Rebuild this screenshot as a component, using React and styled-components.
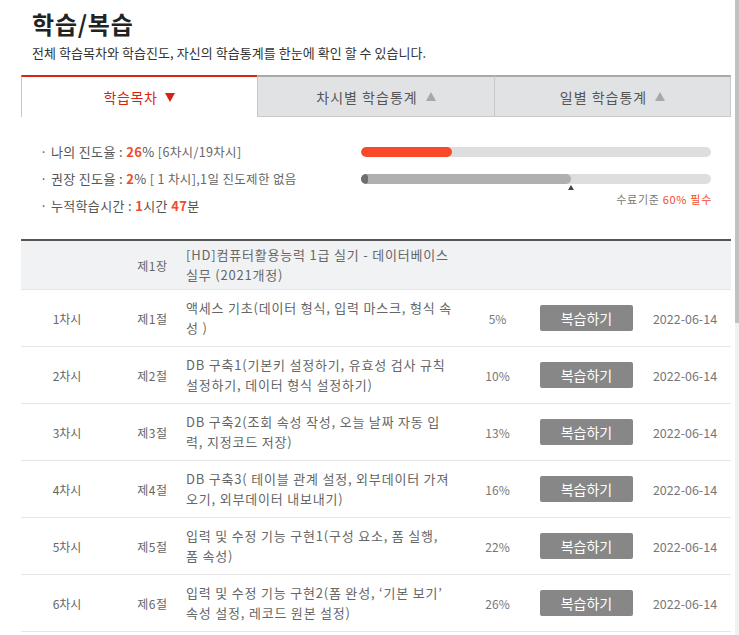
import React from "react";
import styled, { createGlobalStyle } from "styled-components";

const Global = createGlobalStyle`
  html { background: #fff; }
  body {
    margin: 0;
    font-family: "Noto Sans CJK KR", "Noto Sans", sans-serif;
    color: #555;
  }
`;

const ScrollTrack = styled.div`
  position: fixed;
  top: 0;
  right: 0;
  width: 4px;
  height: 100vh;
  background: #f1f1f1;
`;

const ScrollThumb = styled.div`
  height: 323px;
  background: #c1c1c1;
`;

const Page = styled.div`
  width: 710px;
  padding: 8px 0 0 21px;
`;

const Title = styled.h1`
  margin: 0 0 0 11px;
  font-size: 24px;
  line-height: 32px;
  font-weight: 700;
  color: #222;
  letter-spacing: 0.8px;
`;

const Subtitle = styled.p`
  margin: 4px 0 0 11px;
  font-size: 13px;
  line-height: 18px;
  color: #333;
  letter-spacing: 0.05px;
`;

const Tabs = styled.div`
  margin-top: 13px;
  display: grid;
  grid-template-columns: 236px 237px 237px;
`;

const Tab = styled.div`
  display: flex;
  align-items: center;
  justify-content: center;
  gap: 8px;
  font-size: 14px;
  letter-spacing: ${(p) => (p.$active ? "0.6px" : "1px")};
  box-sizing: content-box;
  border-top: 2px solid ${(p) => (p.$active ? "#d9220f" : "#a9a9a9")};
  border-left: 1px solid #c8c8c8;
  border-bottom: ${(p) => (p.$active ? "0" : "1px solid #c8c8c8")};
  border-right: ${(p) => (p.$last ? "1px solid #c8c8c8" : "0")};
  height: ${(p) => (p.$active ? "40px" : "39px")};
  background: ${(p) => (p.$active ? "#fff" : "#e1e2e4")};
  color: ${(p) => (p.$active ? "#d9220f" : "#555")};
`;

const Arrow = styled.span`
  display: inline-block;
  width: 0;
  height: 0;
  border-left: 5.5px solid transparent;
  border-right: 5.5px solid transparent;
  ${(p) =>
    p.$down
      ? `border-top: 9px solid #d9220f;`
      : `border-bottom: 9px solid #a8a8a8;`}
`;

const Stats = styled.div`
  display: flex;
  justify-content: space-between;
  padding: 21px 20px 0 0;
`;

const StatList = styled.ul`
  margin: 0;
  padding: 0 0 0 19px;
  list-style: none;
`;

const StatItem = styled.li`
  font-size: 13px;
  line-height: 27px;
  color: #555;
  letter-spacing: 0.35px;
`;

const Red = styled.b`
  color: #f2492c;
  font-weight: 700;
`;

const Small = styled.span`
  font-size: 12.5px;
  color: #666;
`;

const Bars = styled.div`
  width: 350px;
`;

const BarRow = styled.div`
  height: 27px;
  display: flex;
  align-items: center;
  position: relative;
`;

const Track = styled.div`
  position: relative;
  width: 100%;
  height: 10px;
  border-radius: 5px;
  background: #dedede;
  overflow: hidden;
`;

const Fill = styled.div`
  position: absolute;
  left: 0;
  top: 0;
  bottom: 0;
  border-radius: 5px;
  background: ${(p) => p.$color};
`;

const Marker = styled.span`
  position: absolute;
  top: 20px;
  width: 0;
  height: 0;
  margin-left: -3px;
  border-left: 3px solid transparent;
  border-right: 3px solid transparent;
  border-bottom: 5px solid #444;
`;

const Caption = styled.div`
  text-align: right;
  font-size: 11px;
  line-height: 14px;
  color: #777;
  letter-spacing: 0.7px;
  margin-right: -1px;
`;

const CaptionRed = styled.span`
  color: #f2492c;
`;

const Table = styled.div`
  margin-top: 20px;
  border-top: 2px solid #555;
`;

const Row = styled.div`
  display: grid;
  grid-template-columns: 92px 73px 279px 65px 113px 88px;
  align-items: center;
  min-height: ${(p) => (p.$head ? "48px" : "56px")};
  border-bottom: 1px solid #e6e6e6;
  background: ${(p) => (p.$head ? "#f1f2f4" : "#fff")};
  font-size: 12px;
  color: #666;
`;

const Cell = styled.div`
  text-align: center;
  letter-spacing: ${(p) => (p.$sec ? "0.6px" : "0")};
  padding-left: ${(p) => (p.$sec ? 6 : 0)}px;
`;

const TitleCell = styled.div`
  font-size: 13px;
  line-height: 20px;
  letter-spacing: 0.8px;
  color: #666;
  padding-right: 12px;
`;

const Pct = styled.div`
  text-align: center;
  font-size: 12px;
  color: #777;
`;

const ButtonCell = styled.div`
  display: flex;
  justify-content: center;
`;

const ReviewButton = styled.button`
  width: 93px;
  height: 26px;
  border: 0;
  border-radius: 2px;
  background: #878787;
  color: #fff;
  font-family: inherit;
  font-size: 14px;
  padding: 0;
  cursor: pointer;
`;

const DateCell = styled.div`
  text-align: center;
  font-size: 12.5px;
  color: #777;
  padding-right: 4px;
`;

const rows = [
  ["1차시", "제1절", "액세스 기초(데이터 형식, 입력 마스크, 형식 속성 )", "5%"],
  ["2차시", "제2절", "DB 구축1(기본키 설정하기, 유효성 검사 규칙 설정하기, 데이터 형식 설정하기)", "10%"],
  ["3차시", "제3절", "DB 구축2(조회 속성 작성, 오늘 날짜 자동 입력, 지정코드 저장)", "13%"],
  ["4차시", "제4절", "DB 구축3( 테이블 관계 설정, 외부데이터 가져오기, 외부데이터 내보내기)", "16%"],
  ["5차시", "제5절", "입력 및 수정 기능 구현1(구성 요소, 폼 실행, 폼 속성)", "22%"],
  ["6차시", "제6절", "입력 및 수정 기능 구현2(폼 완성, ‘기본 보기’ 속성 설정, 레코드 원본 설정)", "26%"],
];

export default function App() {
  return (
    <>
      <Global />
      <Page>
        <Title>학습/복습</Title>
        <Subtitle>전체 학습목차와 학습진도, 자신의 학습통계를 한눈에 확인 할 수 있습니다.</Subtitle>
        <Tabs>
          <Tab $active>
            학습목차 <Arrow $down />
          </Tab>
          <Tab>
            차시별 학습통계 <Arrow />
          </Tab>
          <Tab $last>
            일별 학습통계 <Arrow />
          </Tab>
        </Tabs>
        <Stats>
          <StatList>
            <StatItem>
              · 나의 진도율 : <Red>26</Red>% <Small>[6차시/19차시]</Small>
            </StatItem>
            <StatItem>
              · 권장 진도율 : <Red>2</Red>% <Small>[ 1 차시],1일 진도제한 없음</Small>
            </StatItem>
            <StatItem>
              · 누적학습시간 : <Red>1</Red>시간 <Red>47</Red>분
            </StatItem>
          </StatList>
          <Bars>
            <BarRow>
              <Track>
                <Fill $color="#f84a2b" style={{ width: "26%" }} />
              </Track>
            </BarRow>
            <BarRow>
              <Track>
                <Fill $color="#b0b0b0" style={{ width: "60%" }} />
                <Fill $color="#6e6e6e" style={{ width: "2%", minWidth: "7px" }} />
              </Track>
              <Marker style={{ left: "60%" }} />
            </BarRow>
            <Caption>
              수료기준 <CaptionRed>60% 필수</CaptionRed>
            </Caption>
          </Bars>
        </Stats>
        <Table>
          <Row $head>
            <Cell />
            <Cell $sec>제1장</Cell>
            <TitleCell>[HD]컴퓨터활용능력 1급 실기 - 데이터베이스 실무 (2021개정)</TitleCell>
            <Cell />
            <Cell />
            <Cell />
          </Row>
          {rows.map(([no, sec, title, pct]) => (
            <Row key={no}>
              <Cell>{no}</Cell>
              <Cell $sec>{sec}</Cell>
              <TitleCell>{title}</TitleCell>
              <Pct>{pct}</Pct>
              <ButtonCell>
                <ReviewButton>복습하기</ReviewButton>
              </ButtonCell>
              <DateCell>2022-06-14</DateCell>
            </Row>
          ))}
        </Table>
      </Page>
      <ScrollTrack>
        <ScrollThumb />
      </ScrollTrack>
    </>
  );
}
